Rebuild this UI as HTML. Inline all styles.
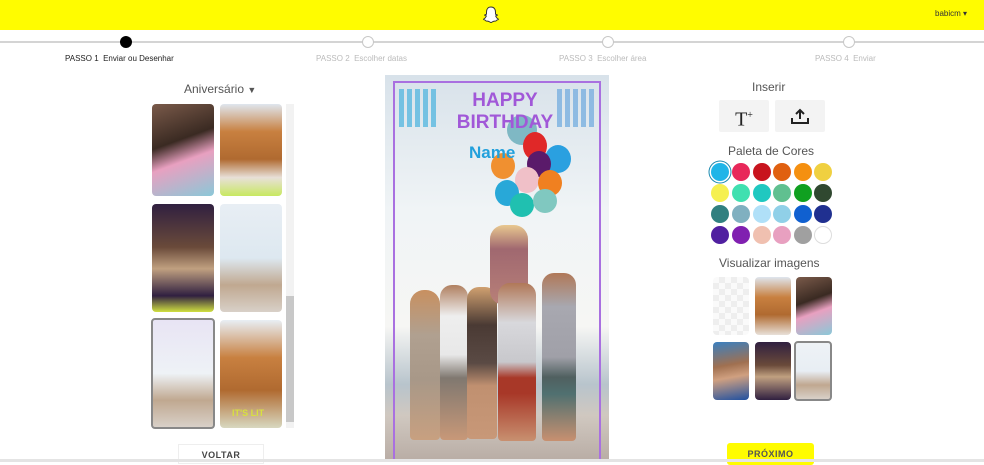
<!DOCTYPE html>
<html><head><meta charset="utf-8"><style>
*{margin:0;padding:0;box-sizing:border-box}
body{width:984px;height:462px;overflow:hidden;background:#fff;font-family:"Liberation Sans",sans-serif;position:relative}
.a{position:absolute}
.t{position:absolute;font-size:8px;color:#bbb;white-space:nowrap}
.dot{position:absolute;width:12px;height:12px;border-radius:50%;border:1.5px solid #c8c8c8;background:#fff;top:36px}
.c{position:absolute;width:18px;height:18px;border-radius:50%}
.th{position:absolute;border-radius:4px;overflow:hidden}
.b{position:absolute;border-radius:50%}
</style></head><body>
<div class="a" style="left:0;top:0;width:984px;height:30px;background:#fffc00"></div>
<svg class="a" style="left:483px;top:6px" width="16" height="17" viewBox="0 0 16 17"><path d="M8 1C5 1 3.5 3.2 3.5 6v2.2l-1.6.6c-.3.2-.2.6.1.7l1.4.5C2.8 11.5 1.8 12.5.8 13c-.3.2-.2.6.1.7 1 .3 1.6.4 1.8.9.2.6.8.6 1.6.5 1-.1 1.9.4 3.7 1.6 1.8-1.2 2.7-1.7 3.7-1.6.8.1 1.4.1 1.6-.5.2-.5.8-.6 1.8-.9.3-.1.4-.5.1-.7-1-.5-2-1.5-2.6-3l1.4-.5c.3-.1.4-.5.1-.7l-1.6-.6V6C12.5 3.2 11 1 8 1z" fill="#fff" stroke="#333" stroke-width="1"/></svg>
<div class="t" style="left:935px;top:9px;color:#333;font-size:8px">babicm &#9662;</div>
<div class="a" style="left:0;top:41px;width:984px;height:2px;background:#d4d4d4"></div>
<div class="a" style="left:120px;top:36px;width:12px;height:12px;border-radius:50%;background:#000"></div>
<div class="dot" style="left:362px"></div>
<div class="dot" style="left:602px"></div>
<div class="dot" style="left:843px"></div>
<div class="t" style="left:65px;top:54px;color:#222">PASSO 1 &nbsp;Enviar ou Desenhar</div>
<div class="t" style="left:316px;top:54px">PASSO 2 &nbsp;Escolher datas</div>
<div class="t" style="left:559px;top:54px">PASSO 3 &nbsp;Escolher área</div>
<div class="t" style="left:815px;top:54px">PASSO 4 &nbsp;Enviar</div>

<div class="t" style="left:184px;top:82px;font-size:12px;color:#555">Aniversário <span style="font-size:9px">&#9660;</span></div>
<div class="th" style="left:152px;top:104px;width:62px;height:92px;background:linear-gradient(160deg,#7a5a4a,#3a2a22 40%,#e8a0c0 60%,#8ac8d8)"></div>
<div class="th" style="left:220px;top:104px;width:62px;height:92px;background:linear-gradient(180deg,#dfe6ee 0%,#c88040 30%,#b06a30 60%,#e8e0d8 80%,#c8e860)"></div>
<div class="th" style="left:152px;top:204px;width:62px;height:108px;background:linear-gradient(180deg,#302040,#6a4a3a 40%,#c0a080 60%,#302040 85%,#d0e040)"></div>
<div class="th" style="left:220px;top:204px;width:62px;height:108px;background:linear-gradient(180deg,#e8eef4,#dde8f0 50%,#c0a890 75%,#d8d0c8)"></div>
<div class="th" style="left:151px;top:318px;width:64px;height:111px;border:2px solid #888;background:linear-gradient(180deg,#e8e4f4,#eef2f6 50%,#c0a890 75%,#d8d0c8)"></div>
<div class="th" style="left:220px;top:320px;width:62px;height:108px;background:linear-gradient(180deg,#e8eef4,#c88040 35%,#b06a30 65%,#d8d8c0)"></div>
<div class="t" style="left:232px;top:408px;color:#d8e040;font-weight:bold;font-size:9px">IT'S LIT</div>
<div class="a" style="left:286px;top:104px;width:8px;height:324px;background:#f2f2f2"></div>
<div class="a" style="left:286px;top:296px;width:8px;height:126px;background:#c8c8c8"></div>
<div class="a" style="left:178px;top:444px;width:86px;height:20px;border:1px solid #eee;font-size:9px;font-weight:bold;color:#444;text-align:center;line-height:20px;letter-spacing:.5px">VOLTAR</div>

<div class="a" style="left:385px;top:75px;width:224px;height:387px;overflow:hidden;background:linear-gradient(180deg,#d8e2ea 0%,#f0f4f6 35%,#f6f6f4 65%,#b8c4cc 80%,#d0c8c0 88%,#b8aca4)">
 <div class="a" style="left:8px;top:6px;width:208px;height:380px;border:2px solid #a970e0"></div>
 <div class="a" style="left:14px;top:14px;width:40px;height:38px;background:repeating-linear-gradient(90deg,#5ab8e0 0 5px,transparent 5px 8px);opacity:.8"></div>
 <div class="a" style="left:172px;top:14px;width:40px;height:38px;background:repeating-linear-gradient(90deg,#7ab0e0 0 5px,transparent 5px 8px);opacity:.8"></div>
 <div class="b" style="left:122px;top:40px;width:30px;height:30px;background:#7fb8c4"></div>
 <div class="b" style="left:138px;top:57px;width:24px;height:28px;background:#e02828"></div>
 <div class="b" style="left:160px;top:70px;width:26px;height:28px;background:#2aa0e0"></div>
 <div class="b" style="left:142px;top:76px;width:24px;height:26px;background:#5a1a6a"></div>
 <div class="b" style="left:106px;top:78px;width:24px;height:26px;background:#f09030"></div>
 <div class="b" style="left:130px;top:92px;width:24px;height:26px;background:#f0c0c8"></div>
 <div class="b" style="left:153px;top:95px;width:24px;height:26px;background:#f08020"></div>
 <div class="b" style="left:110px;top:105px;width:24px;height:26px;background:#28a8d8"></div>
 <div class="b" style="left:125px;top:118px;width:24px;height:24px;background:#20c0b0"></div>
 <div class="b" style="left:148px;top:114px;width:24px;height:24px;background:#80c8c0"></div>
 <div class="a" style="left:0;top:15px;width:224px;text-align:center;color:#a158d8;font-weight:bold;font-size:19px;line-height:22px;padding-left:16px">HAPPY<br>BIRTHDAY</div>
 <div class="a" style="left:84px;top:68px;color:#22a0dc;font-weight:bold;font-size:17px">Name</div>
 <div class="a" style="left:25px;top:215px;width:30px;height:150px;border-radius:14px 14px 4px 4px;background:linear-gradient(180deg,#c89060,#b0a090 30%,#a89888 60%,#c8a080)"></div>
 <div class="a" style="left:55px;top:210px;width:28px;height:155px;border-radius:12px 12px 4px 4px;background:linear-gradient(180deg,#b08060,#eee 20%,#e8e8e8 45%,#807870 60%,#c89878)"></div>
 <div class="a" style="left:82px;top:212px;width:30px;height:152px;border-radius:12px 12px 4px 4px;background:linear-gradient(180deg,#d0a070,#4a3a34 25%,#5a4a44 50%,#c09070 65%,#c89878)"></div>
 <div class="a" style="left:105px;top:150px;width:38px;height:80px;border-radius:14px;background:linear-gradient(180deg,#e8c890,#a06870 30%,#b88078)"></div>
 <div class="a" style="left:113px;top:208px;width:38px;height:158px;border-radius:12px 12px 4px 4px;background:linear-gradient(180deg,#b07858,#d8d8dc 25%,#c8c8cc 50%,#a83828 60%,#a83828 70%,#c89070)"></div>
 <div class="a" style="left:157px;top:198px;width:34px;height:168px;border-radius:12px 12px 4px 4px;background:linear-gradient(180deg,#b07858,#a8a8b0 20%,#a0a0a8 50%,#506060 62%,#507070 72%,#c89070)"></div>
</div>

<div class="t" style="left:752px;top:80px;font-size:12px;color:#555">Inserir</div>
<div class="a" style="left:719px;top:100px;width:50px;height:32px;background:#f3f3f3;border-radius:2px;font-family:'Liberation Serif',serif;font-size:20px;text-align:center;line-height:32px;color:#222">T<sup style="font-size:10px">+</sup></div>
<div class="a" style="left:775px;top:100px;width:50px;height:32px;background:#f3f3f3;border-radius:2px"></div>
<svg class="a" style="left:790px;top:107px" width="20" height="18" viewBox="0 0 20 18"><path d="M10 3v9M6 7l4-4 4 4M2 11v5h16v-5" fill="none" stroke="#222" stroke-width="2"/></svg>
<div class="t" style="left:728px;top:144px;font-size:12px;color:#555">Paleta de Cores</div>
<div class="c" style="left:711px;top:163px;background:#1fb5e8;box-shadow:0 0 0 1.5px #fff,0 0 0 2.5px #1a8ab0"></div>
<div class="c" style="left:732px;top:163px;background:#e8285a"></div>
<div class="c" style="left:753px;top:163px;background:#c8141e"></div>
<div class="c" style="left:773px;top:163px;background:#e06010"></div>
<div class="c" style="left:794px;top:163px;background:#f59010"></div>
<div class="c" style="left:814px;top:163px;background:#f0d040"></div>
<div class="c" style="left:711px;top:184px;background:#f5f050"></div>
<div class="c" style="left:732px;top:184px;background:#40e0b0"></div>
<div class="c" style="left:753px;top:184px;background:#20c8c0"></div>
<div class="c" style="left:773px;top:184px;background:#60c090"></div>
<div class="c" style="left:794px;top:184px;background:#10a020"></div>
<div class="c" style="left:814px;top:184px;background:#304830"></div>
<div class="c" style="left:711px;top:205px;background:#308080"></div>
<div class="c" style="left:732px;top:205px;background:#80b0c0"></div>
<div class="c" style="left:753px;top:205px;background:#b0e0f8"></div>
<div class="c" style="left:773px;top:205px;background:#90d0e8"></div>
<div class="c" style="left:794px;top:205px;background:#1060d0"></div>
<div class="c" style="left:814px;top:205px;background:#203090"></div>
<div class="c" style="left:711px;top:226px;background:#5020a0"></div>
<div class="c" style="left:732px;top:226px;background:#8020b0"></div>
<div class="c" style="left:753px;top:226px;background:#f0c0b0"></div>
<div class="c" style="left:773px;top:226px;background:#e8a0c0"></div>
<div class="c" style="left:794px;top:226px;background:#a0a0a0"></div>
<div class="c" style="left:814px;top:226px;background:#fff;border:1px solid #ddd"></div>
<div class="t" style="left:719px;top:256px;font-size:12px;color:#555">Visualizar imagens</div>
<div class="th" style="left:713px;top:277px;width:36px;height:58px;background:repeating-conic-gradient(#eee 0 25%,#fafafa 0 50%) 0 0/12px 12px"></div>
<div class="th" style="left:755px;top:277px;width:36px;height:58px;background:linear-gradient(180deg,#dfe6ee,#c88040 35%,#b06a30 65%,#e8e0d8)"></div>
<div class="th" style="left:796px;top:277px;width:36px;height:58px;background:linear-gradient(160deg,#7a5a4a,#3a2a22 40%,#e8a0c0 60%,#8ac8d8)"></div>
<div class="th" style="left:713px;top:342px;width:36px;height:58px;background:linear-gradient(170deg,#3a80c0,#a07050 40%,#d0a080 60%,#2050a0)"></div>
<div class="th" style="left:755px;top:342px;width:36px;height:58px;background:linear-gradient(180deg,#302040,#6a4a3a 40%,#c0a080 60%,#302040)"></div>
<div class="th" style="left:794px;top:341px;width:38px;height:60px;border:2px solid #888;background:linear-gradient(180deg,#eef2f6,#e8eef4 50%,#c0a890 75%,#d8d0c8)"></div>
<div class="a" style="left:727px;top:443px;width:87px;height:22px;background:#fffc00;border-radius:3px;font-size:9px;font-weight:bold;color:#555;text-align:center;line-height:22px;letter-spacing:.5px">PRÓXIMO</div>
<div class="a" style="left:0;top:459px;width:984px;height:3px;background:#e4e4e4"></div>
</body></html>
